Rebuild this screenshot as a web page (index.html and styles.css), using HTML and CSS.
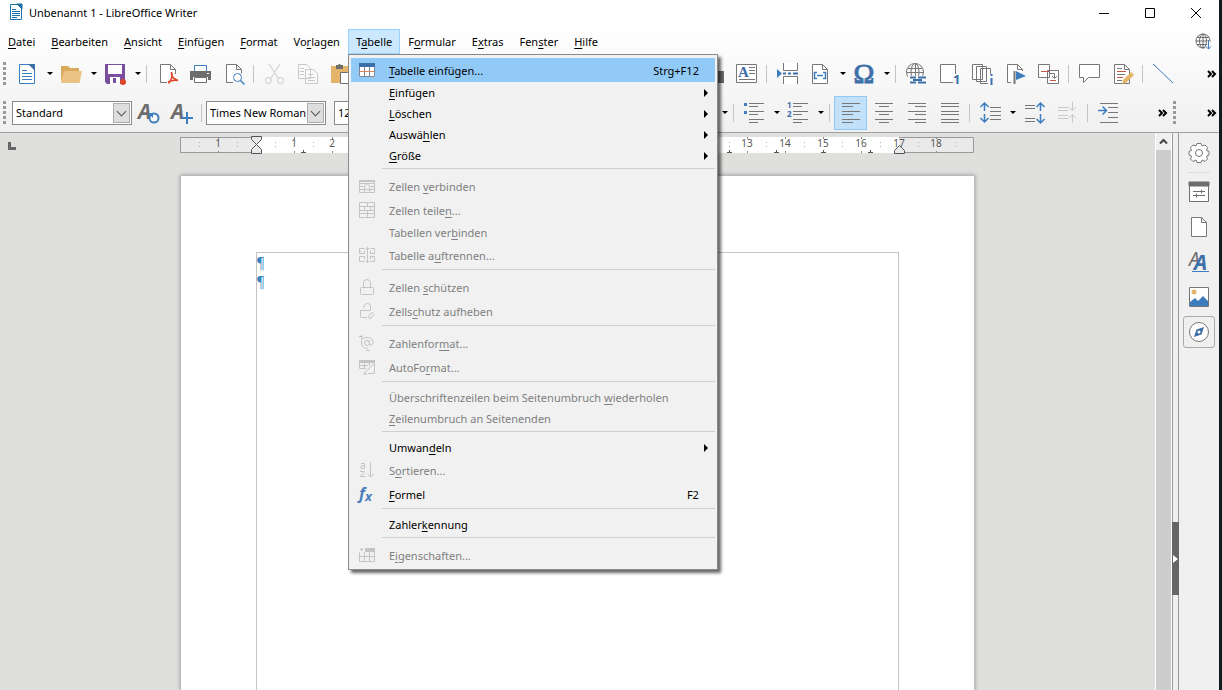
FILE: index.html
```html
<!DOCTYPE html>
<html lang="de">
<head>
  <meta charset="UTF-8" />
  <meta name="viewport" content="width=device-width, initial-scale=1.0"/>
  <title>Unbenannt 1 - LibreOffice Writer</title>
  <link rel="stylesheet" href="styles.css">
</head>
<body>
  <div class="window">
    <header class="titlebar">
      <svg class="app-icon" width="14" height="17" viewBox="0 0 14 17" fill="none" stroke="#1f6fa8"><path d="M1.500.5h7l4 4v11h-11z" fill="#fff"/><path d="M8 0h5v5z" fill="#1f6fa8"/><path d="M3 5.500h4M3 7.500h8M3 9.500h8M3 11.500h8M3 13.500h5"/></svg>
      <h1>Unbenannt 1 - LibreOffice Writer</h1>
      <div class="window-buttons">
        <button aria-label="Minimieren"><svg width="12" height="12" stroke="#000"><path d="M1 6.500h10"/></svg></button>
        <button aria-label="Maximieren"><svg width="12" height="12" stroke="#000" fill="none"><path d="M1.500 1.500h9v9h-9z"/></svg></button>
        <button aria-label="Schließen"><svg width="12" height="12" stroke="#000"><path d="M1 1l10 10M11 1L1 11"/></svg></button>
      </div>
    </header>

    <div class="bars">
      <nav class="menubar">
        <button><u>D</u>atei</button>
        <button><u>B</u>earbeiten</button>
        <button><u>A</u>nsicht</button>
        <button><u>E</u>infügen</button>
        <button><u>F</u>ormat</button>
        <button>Vo<u>r</u>lagen</button>
        <div class="menu-anchor">
          <button class="open">T<u>a</u>belle</button>
          <div class="menu">
            <button class="item icon active"><svg width="16" height="16" fill="none"><path d="M0 1h16v14H0z" fill="#fff"/><path d="M.5 5v9.500h15V5M5.500 5v9.500M10.500 5v9.500" stroke="#7b8794"/><path d="M1 9.500h14" stroke="#d9825b"/><path d="M0 1h16v4H0z" fill="#3d6fa8"/></svg><span><u>T</u>abelle einfügen...</span><kbd>Strg+F12</kbd></button>
            <button class="item sub"><span><u>E</u>infügen</span></button>
            <button class="item sub"><span><u>L</u>öschen</span></button>
            <button class="item sub"><span>Auswä<u>h</u>len</span></button>
            <button class="item sub"><span><u>G</u>röße</span></button>
            <hr>
            <button class="item icon" disabled><svg width="16" height="16" fill="none" stroke="#c4c4c4"><path d="M.5 2.500h15v3H.5zM.5 8.500h4l3-2M15.500 8.500h-4l-3-2M.5 5v9.500h15V5M5.500 9v5M10.500 9v5M.5 11.500h15"/><path d="M0 2h16v2H0z" fill="#c4c4c4" stroke="none"/></svg><span>Zellen <u>v</u>erbinden</span></button>
            <button class="item icon" disabled><svg width="16" height="16" fill="none" stroke="#c4c4c4"><path d="M.5.5h15v15H.5zM0 4.500h16M0 8.500h16M0 11.500h16M8.500 1v3M5.500 5v3M11.500 5v3M8.500 9v2M8.500 12v3"/></svg><span>Zellen teile<u>n</u>...</span></button>
            <button class="item" disabled><span>Tabellen ver<u>b</u>inden</span></button>
            <button class="item icon" disabled><svg width="16" height="16" fill="none" stroke="#c4c4c4"><path d="M8.500 0v16M6.500 2.500l2-2 2 2M6.500 13.500l2 2 2-2M6 6.500H.5v-5h5M5.500 4v3M11 6.500h4.500v-5h-4M11.500 4v3M0 4.500h2M6 9.500H.5v5h5M5.500 9v3M11 9.500h4.500v5h-4M11.500 9v3"/></svg><span>Tabelle a<u>u</u>ftrennen...</span></button>
            <hr>
            <button class="item icon" disabled><svg width="16" height="16" fill="none" stroke="#c4c4c4"><rect x="1.500" y="8.500" width="13" height="7" rx="1"/><path d="M4.500 8V4q0-3.500 3.500-3.500T11.500 4v4"/></svg><span>Zellen <u>s</u>chützen</span></button>
            <button class="item icon" disabled><svg width="16" height="16" fill="none" stroke="#c4c4c4"><path d="M8 14.500H2.500q-1 0-1-1v-6H11M5 5V3q1-2.500 3.500-2.500T11.500 3v4.500"/><path d="M10 15.500v-3l3-3 2 2-3 3.500z"/></svg><span>Zells<u>c</u>hutz aufheben</span></button>
            <hr>
            <button class="item icon" disabled><svg width="16" height="16" fill="none" stroke="#c4c4c4"><circle cx="8" cy="8" r="2.500"/><path d="M10.500 5.500v4q2 2 3.500-1Q14.500 2.500 8 2.500T2.500 8Q3 14 9 13.500M0 1.500h4M2.500 0v4M7 15.500h4"/></svg><span>Zahlenfor<u>m</u>at...</span></button>
            <button class="item icon" disabled><svg width="16" height="16" fill="none" stroke="#c4c4c4"><path d="M.5 1.500h15v13H9M.5 1.500v8H7M5.500 4v6M10.500 4v3M1 6.500h8M15 5l-9 8-1 2.500 3-1"/><path d="M0 1h16v3H0z" fill="#c4c4c4" stroke="none"/></svg><span>AutoFo<u>r</u>mat...</span></button>
            <hr>
            <button class="item" disabled><span>Überschriftenzeilen beim Seitenumbruch <u>w</u>iederholen</span></button>
            <button class="item" disabled><span><u>Z</u>eilenumbruch an Seitenenden</span></button>
            <hr>
            <button class="item sub"><span>Umwan<u>d</u>eln</span></button>
            <button class="item icon" disabled><svg width="16" height="16" fill="none" stroke="#c4c4c4"><path d="M2 1.500h3.500v5H2V4h3.500M1 9.500h4.500l-4 5h5M11.500 0v15M8.500 12l3 3 3-3"/></svg><span>S<u>o</u>rtieren...</span></button>
            <button class="item icon"><svg width="16" height="16"><text class="fx" x="0" y="13">f<tspan class="fx-small" dy="2">x</tspan></text></svg><span><u>F</u>ormel</span><kbd>F2</kbd></button>
            <hr>
            <button class="item"><span>Zahler<u>k</u>ennung</span></button>
            <hr>
            <button class="item icon" disabled><svg width="16" height="16" fill="none" stroke="#c4c4c4"><path d="M.5 5.500v9h15v-13M5.500 5v9M10.500 5v9M0 9.500h16M1 2.500h3M2.500 1v3"/><path d="M6 1h10v4H6z" fill="#c4c4c4" stroke="none"/></svg><span>E<u>i</u>genschaften...</span></button>
          </div>
        </div>
        <button>F<u>o</u>rmular</button>
        <button>E<u>x</u>tras</button>
        <button>Fen<u>s</u>ter</button>
        <button><u>H</u>ilfe</button>
        <button class="update" aria-label="Update verfügbar"><svg width="17" height="17" fill="none" stroke="#6d6d6d"><circle cx="8" cy="8" r="7"/><ellipse cx="8" cy="8" rx="3.500" ry="7"/><path d="M8 1v14M1 8h14M2 4.500h12M2 11.500h12"/><path d="M13.500 8v8M11 13.500l2.500 2.500 2.500-2.500" stroke="#f5f5f5" stroke-width="3"/><path d="M13.500 7v9M11 13.500l2.500 2.500 2.500-2.500" stroke="#3d7dbd"/></svg></button>
      </nav>

      <div class="toolbar">
        <div class="group">
          <span class="grip"></span>
          <button class="tool" aria-label="Neu"><svg viewBox="0 0 23 23" stroke="#3d7dbd"><path d="M3.500 2.500h10l5 5v14h-15z" fill="#fff"/><path d="M12 2h7v7z" fill="#3d6fa8" stroke="none"/><path d="M6 8.500h5M6 11.500h10M6 14.500h10M6 17.500h10"/></svg></button>
          <button class="drop" aria-label="Neu Optionen"></button>
          <button class="tool" aria-label="Öffnen"><svg viewBox="0 0 23 23"><path d="M1 20V4h7l2 2h9v3H5z" fill="#d9a95c"/><path d="M4 9h18l-2.500 12H1z" fill="#eac282"/></svg></button>
          <button class="drop" aria-label="Öffnen Optionen"></button>
          <button class="tool" aria-label="Speichern"><svg viewBox="0 0 23 23"><path d="M1 2h20v20H3l-2-2z" fill="#7b4fa0"/><path d="M4 3h14v9H4zM6 15h10v7H6z" fill="#fff"/><path d="M9 16h3v5H9z" fill="#7b4fa0"/><circle cx="19" cy="20" r="3" fill="#e0452b"/></svg></button>
          <button class="drop" aria-label="Speichern Optionen"></button>
          <span class="sep"></span>
          <button class="tool" aria-label="Als PDF exportieren"><svg viewBox="0 0 23 23" stroke="#777"><path d="M11 20.500H4.500v-18h10l5 5V12M14.500 2.500v5h5" fill="#fff"/><path d="M15.500 10q2 5-3 11.500M15.500 10q-1 6 6.500 8.500-5-1-10 1.500" stroke="#e0452b" stroke-width="1.500"/></svg></button>
          <button class="tool" aria-label="Drucken"><svg viewBox="0 0 23 23"><path d="M5.500 9V3.500h12V9" fill="#fff" stroke="#3d7dbd"/><path d="M1 9h21v9h-3v-3H4v3H1z" fill="#6d6d6d"/><path d="M5.500 15.500h12v5h-12z" fill="#fff" stroke="#6d6d6d"/><path d="M18 11h2v1h-2z" fill="#fff"/></svg></button>
          <button class="tool" aria-label="Druckvorschau"><svg viewBox="0 0 23 23" stroke="#777"><path d="M11 20.500H4.500v-18h10l5 5v4M14.500 2.500v5h5" fill="#fff"/><circle cx="15.500" cy="15.500" r="4" fill="#fff" stroke="#3d7dbd"/><path d="M18.500 18.500l4 4" stroke="#3d7dbd" stroke-width="1.500"/></svg></button>
          <span class="sep"></span>
          <button class="tool" disabled aria-label="Ausschneiden"><svg viewBox="0 0 23 23" stroke="#c8c8c8"><path d="M6 2l9 14M17 2L8 16"/><circle cx="5.500" cy="18.500" r="3"/><circle cx="17.500" cy="18.500" r="3"/></svg></button>
          <button class="tool" disabled aria-label="Kopieren"><svg viewBox="0 0 23 23" stroke="#c8c8c8"><path d="M2.500 2.500h8l4 4v10h-12zM9.500 7.500h8l4 4v10h-12z" fill="#fafafa"/><path d="M4 6.500h4M4 9.500h4M4 12.500h4M12 12.500h5M12 15.500h7M12 18.500h7"/></svg></button>
          <button class="tool" aria-label="Einfügen"><svg viewBox="0 0 23 23"><path d="M2 4h18v17H2z" fill="#e4b46a"/><path d="M7 3h2q1.500-2 3 0h2v4H7z" fill="#6d6d6d"/><path d="M11.500 10.500h7l4 4v7h-11z" fill="#fff" stroke="#6d6d6d"/></svg></button>
        </div>
        <div class="group right">
          <button class="tool" aria-label="Bild"><svg viewBox="0 0 23 23"><path d="M1 9h21v12H1z" fill="#6d6d6d"/></svg></button>
          <button class="tool" aria-label="Textfeld"><svg viewBox="0 0 23 23"><path d="M1.500 2.500h20v18h-20z" fill="#fff" stroke="#777"/><text class="glyph serif bold" x="3" y="15" font-size="15">A</text><path d="M14 5.500h6M14 8.500h6M14 11.500h6M4 17.500h16" stroke="#777"/></svg></button>
          <span class="sep"></span>
          <button class="tool" aria-label="Seitenumbruch"><svg viewBox="0 0 23 23" stroke="#777"><path d="M7.500 1v7.500h14V1M7.500 22v-7.500h14V22" fill="#fff"/><path d="M1 7l5 4.500L1 16z" fill="#3d7dbd" stroke="none"/><path d="M7 11.500h3M12 11.500h3M17 11.500h5" stroke="#3d6fa8" stroke-width="2"/></svg></button>
          <button class="tool" aria-label="Feldbefehl"><svg viewBox="0 0 23 23" stroke="#777"><path d="M3.500 2.500h10l5 5v14h-15zM13.500 2.500v5h5" fill="#fff"/><path d="M8 10.500H5.500v6H8M14 10.500h2.500v6H14M8 13.500h6" stroke="#3d7dbd" stroke-width="1.500"/></svg></button>
          <button class="drop" aria-label="Feldbefehl Optionen"></button>
          <button class="tool" aria-label="Sonderzeichen"><svg viewBox="0 0 23 23"><text class="glyph omega" x="11" y="21">Ω</text></svg></button>
          <button class="drop" aria-label="Sonderzeichen Optionen"></button>
          <span class="sep"></span>
          <button class="tool" aria-label="Hyperlink"><svg viewBox="0 0 23 23" stroke="#777"><circle cx="10" cy="10" r="8.500"/><ellipse cx="10" cy="10" rx="4" ry="8.500"/><path d="M10.500 2v16M2 10.500h17M3 6.500h14"/><path d="M3 14h20v9H3z" fill="#f8f8f8" stroke="none"/><path d="M5 15.500h6M13 15.500h8M5 20.500h6M13 20.500h8M8 18h9" stroke="#3d6fa8" stroke-width="2"/></svg></button>
          <button class="tool" aria-label="Fußnote"><svg viewBox="0 0 23 23"><path d="M15 20.500H2.500v-18h15V12" fill="#fff" stroke="#777"/><text class="glyph bold" x="15" y="22" font-size="13">1</text></svg></button>
          <button class="tool" aria-label="Endnote"><svg viewBox="0 0 23 23" stroke="#777"><path d="M1.500 2.500h10v15h-10zM5.500 4.500h10v15h-10zM17 21.500H9.500v-15h10V12" fill="#fff"/><path d="M20.500 16v7M20.500 12v2" stroke="#3d6fa8" stroke-width="2"/></svg></button>
          <button class="tool" aria-label="Lesezeichen"><svg viewBox="0 0 23 23" stroke="#777"><path d="M7 20.500H3.500v-18h10l5 5V9M13.500 2.500v5h5" fill="#fff"/><path d="M10.500 9v13" stroke-width="2"/><path d="M12 9l10 5-10 4z" fill="#3d7dbd" stroke="none"/></svg></button>
          <button class="tool" aria-label="Querverweis"><svg viewBox="0 0 23 23" stroke="#777"><path d="M1.500 2.500h11v13h-11zM10.500 8.500h11v13h-11z" fill="#fff"/><path d="M4 9.500h8M13 18.500h6" stroke="#c4574a"/><path d="M13 11.500h4.500V16M15 14l2.500 2.500L20 14"/></svg></button>
          <span class="sep"></span>
          <button class="tool" aria-label="Kommentar"><svg viewBox="0 0 23 23" stroke="#777"><path d="M1.500 2.500h20v13h-11l-5 5v-5h-4z" fill="#fff"/></svg></button>
          <button class="tool" aria-label="Änderungen verfolgen"><svg viewBox="0 0 23 23" stroke="#777"><path d="M3.500 2.500h10l5 5v14h-15zM13.500 2.500v5h5" fill="#fff"/><path d="M6 6.500h5M6 12.500h8M6 18.500h5" /><path d="M6 9.500h9M6 15.500h6" stroke="#c4574a"/><path d="M20 10l3 3-8 8-4 1 1-4z" fill="#e4b46a" stroke="none"/></svg></button>
          <span class="sep"></span>
          <button class="tool" aria-label="Linie"><svg viewBox="0 0 23 23" stroke="#3d7dbd"><path d="M1 2l20 19"/></svg></button>
          <button class="more" aria-label="Mehr"><svg width="10" height="8" viewBox="0 0 10 8"><path d="M1 1l3 3-3 3M5 1l3 3-3 3"/></svg></button>
        </div>
      </div>

      <div class="toolbar">
        <div class="group">
          <span class="grip"></span>
          <div class="combo"><select aria-label="Absatzvorlage"><option>Standard</option></select><span class="chevron"></span></div>
          <button class="tool" aria-label="Vorlage aktualisieren"><svg viewBox="0 0 23 23"><text class="glyph gray bold italic" x="1" y="18" font-size="21">A</text><circle cx="17" cy="17" r="4.500" fill="#fafafa" stroke="#3d7dbd" stroke-width="2"/><path d="M11 12h5v5z" fill="#3d7dbd"/></svg></button>
          <button class="tool" aria-label="Neue Vorlage"><svg viewBox="0 0 23 23"><text class="glyph gray bold italic" x="1" y="18" font-size="21">A</text><path d="M17 11v12M11 17h12" stroke="#3d7dbd" stroke-width="2"/></svg></button>
          <span class="sep"></span>
          <div class="combo font"><select aria-label="Schriftart"><option>Times New Roman</option></select><span class="chevron"></span></div>
          <div class="combo size"><select aria-label="Schriftgröße"><option>12</option></select><span class="chevron"></span></div>
        </div>
        <div class="group right">
          <button class="drop" aria-label="Hervorhebung Optionen"></button>
          <span class="sep"></span>
          <button class="tool" aria-label="Aufzählung"><svg viewBox="0 0 23 23" stroke="#777"><path d="M6 2.500h15M6 5.500h9M6 10.500h15M6 13.500h9M6 18.500h15M6 21.500h9"/><path d="M1 2h3v3H1zM1 10h3v3H1z" fill="#3d7dbd" stroke="none"/></svg></button>
          <button class="drop" aria-label="Aufzählung Optionen"></button>
          <button class="tool" aria-label="Nummerierung"><svg viewBox="0 0 23 23" stroke="#777"><path d="M6 2.500h15M6 5.500h9M6 10.500h15M6 13.500h9M6 18.500h15M6 21.500h9"/><text class="glyph bold" font-size="8"><tspan x="0" y="7">1</tspan><tspan x="0" y="16">2</tspan></text></svg></button>
          <button class="drop" aria-label="Nummerierung Optionen"></button>
          <span class="sep"></span>
          <button class="tool checked" aria-label="Linksbündig"><svg viewBox="0 0 23 23" stroke="#777"><path d="M3 2.500h18M3 5.500h11M3 10.500h18M3 13.500h11M3 18.500h18M3 21.500h11"/></svg></button>
          <button class="tool" aria-label="Zentriert"><svg viewBox="0 0 23 23" stroke="#777"><path d="M3 2.500h18M7 5.500h10M3 10.500h18M7 13.500h10M3 18.500h18M7 21.500h10"/></svg></button>
          <button class="tool" aria-label="Rechtsbündig"><svg viewBox="0 0 23 23" stroke="#777"><path d="M3 2.500h18M10 5.500h11M3 10.500h18M10 13.500h11M3 18.500h18M10 21.500h11"/></svg></button>
          <button class="tool" aria-label="Blocksatz"><svg viewBox="0 0 23 23" stroke="#777"><path d="M3 2.500h18M3 5.500h18M3 10.500h18M3 13.500h18M3 18.500h18M3 21.500h18"/></svg></button>
          <span class="sep"></span>
          <button class="tool" aria-label="Zeilenabstand"><svg viewBox="0 0 23 23" stroke="#777"><path d="M11 6.500h11M11 10.500h11M11 14.500h11M11 18.500h11"/><path d="M5.500 2v8M1.500 6l4-4 4 4M5.500 13v8M1.500 17l4 4 4-4" stroke="#3d7dbd" stroke-width="1.500"/></svg></button>
          <button class="drop" aria-label="Zeilenabstand Optionen"></button>
          <button class="tool" aria-label="Absatzabstand erhöhen"><svg viewBox="0 0 23 23" stroke="#777"><path d="M2 4.500h10M2 7.500h10M2 17.500h10M2 20.500h10"/><path d="M17.500 2v8M13.500 6l4-4 4 4M17.500 13v9M13.500 18l4 4 4-4" stroke="#3d7dbd" stroke-width="1.500"/></svg></button>
          <button class="tool" disabled aria-label="Absatzabstand verringern"><svg viewBox="0 0 23 23" stroke="#c8c8c8"><path d="M2 6.500h10M2 9.500h10M2 14.500h10M2 17.500h10"/><path d="M16.500 1v8M13 6l3.500 3.500L20 6M16.500 22v-8M13 17l3.500-3.500L20 17"/></svg></button>
          <span class="sep"></span>
          <button class="tool" aria-label="Einzug erhöhen"><svg viewBox="0 0 23 23" stroke="#777"><path d="M3 2.500h18M11 6.500h10M11 11.500h10M11 16.500h10M3 21.500h18"/><path d="M1 9.500h8M5.500 5.500l4 4-4 4" stroke="#3d7dbd" stroke-width="1.500"/></svg></button>
          <button class="more inner" aria-label="Mehr"><svg width="10" height="8" viewBox="0 0 10 8"><path d="M1 1l3 3-3 3M5 1l3 3-3 3"/></svg></button>
          <span class="grip end"></span>
          <button class="more" aria-label="Mehr"><svg width="10" height="8" viewBox="0 0 10 8"><path d="M1 1l3 3-3 3M5 1l3 3-3 3"/></svg></button>
        </div>
      </div>
    </div>

    <div class="workspace">
      <main class="document">
        <div class="ruler-row">
          <svg class="tab-type" width="8" height="8"><path d="M0 0h3v5h5v3H0z" fill="#666"/></svg>
          <svg class="ruler" id="ruler" width="795" height="18" viewBox="0 0 795 18"></svg>
        </div>
        <article class="page">
          <div class="text-area">
            <p>¶</p>
            <p>¶</p>
          </div>
        </article>
      </main>
      <div class="scrollbar">
        <button aria-label="Nach oben"><svg width="9" height="7" fill="none" stroke="#444" stroke-width="2"><path d="M1 5.500l3.500-3.500L8 5.500"/></svg></button>
        <div class="thumb"></div>
      </div>
      <div class="splitter"><button aria-label="Seitenleiste ausblenden"></button></div>
      <aside class="sidebar">
        <button aria-label="Einstellungen"><svg width="22" height="22" fill="none" stroke="#777"><path d="M9 1.500h4l1 2.500 3-1 2.500 2.500-1 3 2.500 1v3.500l-2.500 1 1 3L17 19.500l-3-1.500-1 2.500H9L8 18l-3 1.500L2.500 17l1-3L1 13V9.500l2.500-1-1-3L5 3l3 1z" fill="#fff"/><circle cx="11" cy="11" r="3.500"/></svg></button>
        <hr>
        <button aria-label="Eigenschaften"><svg width="22" height="22" fill="none" stroke="#6d6d6d"><path d="M1.500 1.500h19v19h-19z" fill="#fff"/><path d="M1 1h20v4H1z" fill="#6d6d6d"/><path d="M5 10.500h12M5 14.500h12M13.500 8.500v4M8.500 12.500v4"/></svg></button>
        <button aria-label="Seite"><svg width="22" height="22" fill="#fff" stroke="#777"><path d="M3.500 1.500h10l5 5v14h-15zM13.500 1.500v5h5"/></svg></button>
        <button aria-label="Formatvorlagen"><svg width="22" height="22"><text class="glyph gray italic" x="1" y="15" font-size="19">A</text><text class="glyph bold italic" x="6" y="19" font-size="21">A</text><path d="M4 20.500h17" stroke="#3d7dbd"/></svg></button>
        <button aria-label="Galerie"><svg width="22" height="22"><path d="M1.500 1.500h19v19h-19z" fill="#fff" stroke="#777"/><circle cx="6" cy="6" r="2.500" fill="#e4b46a"/><path d="M2 20v-4l5-4 3 3 5-5 5 5v5z" fill="#3d7dbd"/></svg></button>
        <button class="boxed" aria-label="Navigator"><svg width="22" height="22"><circle cx="11" cy="11" r="9.500" fill="#fff" stroke="#777"/><path d="M16 6l-2.500 7.500L6 16l2.500-7.500z" fill="#3d6fa8"/><circle cx="11" cy="11" r="1.500" fill="#fff"/></svg></button>
      </aside>
    </div>
  </div>
  <div class="desktop"></div>

  <script>
    const ruler = document.getElementById('ruler');
    const cm = 37.8;
    const zero = 76;
    let marks = '<path class="edge" d="M.5 1.500h793v15H.5z"/><path class="usable" d="M76 1h643v16H76z"/>';

    for (let i = -1; i <= 18; i++) {
      const x = Math.round(zero + i * cm);
      if (i !== 0) {
        if (i !== 17) marks += `<path class="tick" d="M${x}.5 1v2M${x}.5 15v2"/>`;
        marks += `<text x="${x}" y="11">${Math.abs(i)}</text>`;
      }
      const half = Math.round(zero + (i - 0.5) * cm);
      marks += `<path class="dots" d="M${half}.5 6v2M${half}.5 10v2"/>`;
    }
    marks += `<path class="dots" d="M776.500 6v2M776.500 10v2"/>`;

    // default tab stops, every 1.25 cm
    for (let t = 1; t < 14; t++) {
      const x = Math.round(zero + t * 1.25 * cm);
      marks += `<path class="stop" d="M${x}.5 14v3M${x - 2} 16.500h5"/>`;
    }

    // indent markers
    marks += '<path class="indent" d="M71.500.5h10v3l-5 5-5-5zM71.500 17.500h10v-4l-5-5-5 5z"/>';
    marks += '<path class="indent" d="M714.500 17.500h10v-3l-5-5-5 5z"/>';
    ruler.innerHTML = marks;
  </script>
</body>
</html>
```

FILE: styles.css
```css
* {
  box-sizing: border-box;
}

body {
  margin: 0;
  height: 100vh;
  display: flex;
  overflow: hidden;
  font-family: 'Noto Sans', 'Open Sans', sans-serif;
  font-size: 11px;
  color: #000;
}

button {
  font: inherit;
  color: inherit;
  background: none;
  border: none;
  padding: 0;
}

svg {
  display: block;
  overflow: visible;
}

u {
  text-underline-offset: 2px;
}

.window {
  flex: 1;
  min-width: 0;
  display: flex;
  flex-direction: column;
  background: #fff;
}

.desktop {
  width: 3px;
  background: #0e1b21;
}

/* title bar */
.titlebar {
  display: flex;
  align-items: center;
  height: 28px;
  padding: 0 17px 3px 9px;
}

.titlebar h1 {
  margin: 0 0 0 6px;
  font-size: 11px;
  font-weight: normal;
}

.window-buttons {
  display: flex;
  gap: 34px;
  margin-left: auto;
}

/* menu bar */
.bars {
  background: linear-gradient(#fff, #f0f0f0);
  border-bottom: 1px solid #a0a0a0;
}

.menubar {
  display: flex;
  height: 26px;
  padding-top: 1px;
}

.menubar > button,
.menu-anchor > button {
  height: 25px;
  padding: 0 8px;
}

.menu-anchor {
  position: relative;
}

.menu-anchor > .open {
  background: #cce8ff;
  box-shadow: inset 0 0 0 1px #99d1ff;
}

.menubar > .update {
  margin-left: auto;
  padding: 0 7px;
}

.menu {
  position: absolute;
  z-index: 5;
  top: 100%;
  left: 0;
  width: 370px;
  padding: 3px 2px 2px;
  background: #f1f1f1;
  border: 1px solid #8a8a8a;
  box-shadow: 3px 3px 3px rgba(0, 0, 0, 0.6);
}

.item {
  display: grid;
  grid-template-columns: 38px 1fr auto;
  align-items: center;
  width: 100%;
  height: 21px;
  padding-right: 16px;
  text-align: left;
}

.item.icon {
  height: 24px;
}

.item svg {
  margin-left: 8px;
}

.item span {
  grid-column: 2;
  white-space: nowrap;
}

.item kbd {
  font: inherit;
}

.item.active {
  background: #91c9f7;
}

.item:disabled {
  color: #808080;
}

.item.sub {
  padding-right: 7px;
}

.item.sub::after {
  content: "";
  border: 4px solid transparent;
  border-left-color: #000;
  border-right-width: 0;
}

.menu hr {
  margin: 2px 0 5px 31px;
  border: none;
  border-top: 1px solid #cfcfcf;
}

.fx {
  font: italic bold 16px 'Noto Sans', sans-serif;
  fill: #4a7ebb;
}

.fx-small {
  font-size: 13px;
}

/* toolbars */
.toolbar {
  display: flex;
  height: 39px;
}

.group {
  display: flex;
  align-items: center;
  flex: none;
}

.group.right {
  margin-left: auto;
}

.grip {
  width: 3px;
  height: 23px;
  margin: 0 5px 0 3px;
  background: repeating-linear-gradient(#999 0 3px, transparent 3px 5px);
}

.grip.end {
  margin: 0 29px 0 3px;
}

.tool {
  width: 33px;
  height: 34px;
  padding: 0 5px;
}

.tool svg {
  width: 23px;
  height: 23px;
  fill: none;
}

.tool.checked {
  background: #c2e0f8;
  box-shadow: inset 0 0 0 1px #90c8f6;
}

.drop {
  width: 11px;
  height: 34px;
  display: grid;
  place-items: center;
}

.drop::after {
  content: "";
  border: 3px solid transparent;
  border-top-color: #000;
  border-bottom-width: 0;
}

.sep {
  width: 1px;
  height: 18px;
  margin: 0 4px 0 3px;
  background: #c4c4c4;
}

.more {
  width: 14px;
  height: 34px;
  margin-left: 25px;
}

.more.inner {
  margin-left: 31px;
}

.grip + .more {
  margin-left: 0;
}

.more svg {
  margin: auto;
  fill: none;
  stroke: #000;
  stroke-width: 2;
}

.glyph {
  font-family: 'Noto Sans', sans-serif;
  fill: #3d6fa8;
  stroke: none;
}

.glyph.serif {
  font-family: 'Liberation Serif', serif;
}

.glyph.omega {
  font-family: 'Liberation Serif', serif;
  font-size: 28px;
  text-anchor: middle;
  stroke: #3d6fa8;
}

.glyph.gray {
  fill: #6d6d6d;
}

.bold {
  font-weight: bold;
}

.italic {
  font-style: italic;
}

.combo {
  position: relative;
  width: 120px;
  height: 24px;
  margin-left: 1px;
}

.combo.font {
  margin-left: 0;
}

.combo.size {
  width: 60px;
  margin-left: 8px;
}

.combo select {
  appearance: none;
  width: 100%;
  height: 24px;
  padding: 0 3px;
  font: inherit;
  color: #000;
  background: #fff;
  border: 1px solid #8a8a8a;
  border-radius: 0;
}

.chevron {
  position: absolute;
  top: 2px;
  right: 2px;
  width: 17px;
  height: 20px;
  display: grid;
  place-items: center;
  background: #dedede;
  border: 1px solid #adadad;
  pointer-events: none;
}

.chevron::after {
  content: "";
  width: 6px;
  height: 6px;
  margin-bottom: 3px;
  border: solid #555;
  border-width: 0 1px 1px 0;
  transform: rotate(45deg);
}

/* document */
.workspace {
  flex: 1;
  min-height: 0;
  display: flex;
  background: #dfdfde;
}

.document {
  flex: 1;
  min-width: 0;
  display: flex;
  flex-direction: column;
  padding-top: 3px;
}

.ruler-row {
  display: grid;
  grid-template-columns: 1fr 795px 1fr;
  height: 18px;
  margin-bottom: 21px;
}

.tab-type {
  margin: 6px 8px;
}

.ruler {
  font-size: 10px;
}

.ruler text {
  fill: #555;
  text-anchor: middle;
}

.edge {
  fill: #eaeaea;
  stroke: #999;
}

.usable {
  fill: #fff;
}

.tick {
  stroke: #888;
}

.dots {
  stroke: #aaa;
  stroke-dasharray: 1;
}

.stop {
  stroke: #555;
}

.indent {
  fill: #eaeaea;
  stroke: #555;
}

.page {
  flex: 1;
  width: 795px;
  margin: 0 auto;
  padding: 76px 75px 0;
  background: #fff;
  border: 1px solid #bbb;
  border-bottom: none;
  box-shadow: 0 0 4px rgba(0, 0, 0, 0.3);
}

.text-area {
  height: 100%;
  border: 1px solid #c4c4c4;
  border-bottom: none;
}

.text-area p {
  margin: 0;
  font-family: 'Liberation Serif', serif;
  font-size: 16px;
  line-height: 19px;
  color: #3584bd;
}

.scrollbar {
  width: 17px;
  display: flex;
  flex-direction: column;
  padding: 0 1px;
  background: #fff;
}

.scrollbar button {
  height: 17px;
  padding-left: 3px;
  background: #f0f0f0;
}

.thumb {
  flex: 1;
  background: #cdcdcd;
}

.splitter {
  width: 7px;
  background: #f0f0f0;
  border: solid #999;
  border-width: 0 1px;
}

.splitter button {
  width: 7px;
  height: 73px;
  margin: 389px -1px 0;
  display: grid;
  place-items: center;
  background: #666;
}

.splitter button::after {
  content: "";
  border: 4px solid transparent;
  border-left: 5px solid #fff;
  border-right: none;
}

.sidebar {
  width: 40px;
  display: flex;
  flex-direction: column;
  align-items: center;
  padding-top: 4px;
  background: #f0f0f0;
}

.sidebar button {
  width: 32px;
  height: 32px;
  margin-bottom: 3px;
  display: grid;
  place-items: center;
}

.sidebar hr {
  width: 22px;
  margin: 0 0 3px;
  border: none;
  border-top: 1px solid #dcdcdc;
}

.sidebar .boxed {
  border: 1px solid #aaa;
  border-radius: 3px;
}
```
